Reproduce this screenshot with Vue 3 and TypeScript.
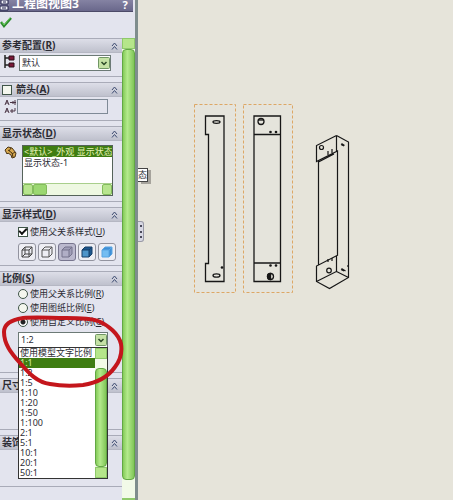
<script setup lang="ts">
import { ref } from 'vue'

const config = ref('默认')
const arrowOn = ref(false)
const arrowLabel = ref('')
const useParentStyle = ref(true)
const scaleMode = ref('custom')
const scale = ref('1:2')
const highlighted = ref('1:1')
const activeStyle = ref('hlr')

const states = ['<默认>_外观 显示状态', '显示状态-1']
const scaleModes = [
  { id: 'parent', label: '使用父关系比例', key: 'R' },
  { id: 'sheet', label: '使用图纸比例', key: 'E' },
  { id: 'custom', label: '使用自定义比例', key: 'C' },
]
const scales = ['使用模型文字比例', '1:1', '1:2', '1:5', '1:10', '1:20', '1:50', '1:100', '2:1', '5:1', '10:1', '20:1', '50:1']
const styles = [
  { id: 'wire', name: '线架图', front: 'none', side: 'none', ink: '#444', hidden: true },
  { id: 'hlv', name: '隐藏线可见', front: 'none', side: 'none', ink: '#555', hidden: false },
  { id: 'hlr', name: '消除隐藏线', front: '#b0aec6', side: '#a19fb8', ink: '#74728c', hidden: false },
  { id: 'edges', name: '带边线上色', front: '#4d94c9', side: '#1d568c', ink: '#173f68', hidden: false },
  { id: 'shaded', name: '上色', front: '#74bdf2', side: '#3f8fd6', ink: '#5aa5e2', hidden: false },
]
</script>

<template>
  <main class="app">
    <aside class="panel">
      <header class="title">
        <svg class="title-icon" viewBox="0 0 12 12"><path d="M1 0h7v4H1zM0 6h8v4H0z" fill="#f3f3fa" stroke="#23234a" /><path d="M2 8h4M3 2h3" stroke="#23234a" /></svg>
        <h1>工程图视图3</h1>
        <button class="help" aria-label="帮助">?</button>
      </header>
      <div class="confirm">
        <button aria-label="确定">
          <svg viewBox="0 0 13 12"><path d="M1 6l3 4 7-8" fill="none" stroke="#2b8a2b" stroke-width="2.500" /><path d="M2 6l2 3 6-7" fill="none" stroke="#6ccb5c" stroke-width="1" /></svg>
        </button>
      </div>

      <div class="scroller">
        <div class="sections">
          <section>
            <h2><span>参考配置(<u>R</u>)</span><svg class="chev" viewBox="0 0 7 8"><path d="M1 4l2.500-3L6 4M1 7.500l2.500-3L6 7.500" /></svg></h2>
            <div class="body row config">
              <svg class="cfg-icon" viewBox="0 0 12 14"><path d="M1 0v13M1 3h4M1 10h4" stroke="#222" stroke-width="1.500" fill="none" /><path d="M5 1h5v4H5zM5 8h5v4H5z" fill="#7a1838" stroke="#2a1018" /></svg>
              <div class="combo">
                <select v-model="config" aria-label="参考配置"><option>默认</option></select>
                <svg class="drop" viewBox="0 0 12 12"><rect x=".5" y=".5" width="11" height="11" rx="1" /><path d="M3.500 5L6 7.500 8.500 5" /></svg>
              </div>
            </div>
          </section>

          <section>
            <h2>
              <label><input v-model="arrowOn" type="checkbox" /><span>箭头(<u>A</u>)</span></label>
              <svg class="chev" viewBox="0 0 7 8"><path d="M1 4l2.500-3L6 4M1 7.500l2.500-3L6 7.500" /></svg>
            </h2>
            <div class="body row arrow">
              <svg class="arrow-icon" viewBox="0 0 13 15"><path d="M1 6l2-5 2 5M2 4h2M1 14l2-5 2 5M2 12h2M6 3.500h6M9 2v3M11 1v5M6 12h5V9M8 10v4" stroke="#4a3444" fill="none" /></svg>
              <input v-model="arrowLabel" class="text" type="text" aria-label="箭头标号" />
            </div>
          </section>

          <section>
            <h2><span>显示状态(<u>D</u>)</span><svg class="chev" viewBox="0 0 7 8"><path d="M1 4l2.500-3L6 4M1 7.500l2.500-3L6 7.500" /></svg></h2>
            <div class="body row state">
              <svg class="state-icon" viewBox="0 0 14 14"><path d="M1 5l3-3 4 1 4 5-1 4-3 1-1-3-3-2-1 1z" fill="#d7a850" stroke="#4b3515" /><path d="M4 5l4 3 1 4M7 3l-2 3M11 7l-3 2" fill="none" stroke="#4b3515" /></svg>
              <div class="listbox">
                <ul role="listbox" aria-label="显示状态">
                  <li v-for="(s, i) in states" :key="s" role="option" :aria-selected="i === 0" :class="{ on: i === 0 }">{{ s }}</li>
                </ul>
                <div class="hbar"><i class="end"></i><i class="thumb"></i><i class="end right"></i></div>
              </div>
            </div>
          </section>

          <section>
            <h2><span>显示样式(<u>D</u>)</span><svg class="chev" viewBox="0 0 7 8"><path d="M1 4l2.500-3L6 4M1 7.500l2.500-3L6 7.500" /></svg></h2>
            <div class="body display">
              <label><input v-model="useParentStyle" type="checkbox" /><span>使用父关系样式(<u>U</u>)</span></label>
              <div class="cubes">
                <button v-for="s in styles" :key="s.id" :class="{ pressed: s.id === activeStyle }" :aria-label="s.name" @click="activeStyle = s.id">
                  <svg viewBox="0 0 14 14">
                    <path d="M2 5l3-3h7v7l-3 3H2z" :fill="s.side" />
                    <path d="M2 5h7v7H2z" :fill="s.front" />
                    <path d="M2 5l3-3h7v7l-3 3H2zM2 5h7v7M9 5l3-3" fill="none" :stroke="s.ink" />
                    <path v-if="s.hidden" d="M5 2v7h7M5 9l-3 3" fill="none" :stroke="s.ink" />
                  </svg>
                </button>
              </div>
            </div>
          </section>

          <section>
            <h2><span>比例(<u>S</u>)</span><svg class="chev" viewBox="0 0 7 8"><path d="M1 4l2.500-3L6 4M1 7.500l2.500-3L6 7.500" /></svg></h2>
            <div class="body scale">
              <label v-for="m in scaleModes" :key="m.id"><input v-model="scaleMode" type="radio" name="scale" :value="m.id" /><span>{{ m.label }}(<u>{{ m.key }}</u>)</span></label>
              <div class="combo">
                <select v-model="scale" aria-label="比例"><option v-for="s in scales" :key="s">{{ s }}</option></select>
                <svg class="drop" viewBox="0 0 12 12"><rect x=".5" y=".5" width="11" height="11" rx="1" /><path d="M3.500 5L6 7.500 8.500 5" /></svg>
                <div class="menu">
                  <ul role="listbox" aria-label="比例选项">
                    <li v-for="s in scales" :key="s" role="option" :aria-selected="s === highlighted" :class="{ on: s === highlighted }">{{ s }}</li>
                  </ul>
                  <div class="vbar"><i class="cap"></i><i class="gap"></i><i class="thumb"></i><i class="cap"></i></div>
                </div>
              </div>
              <svg class="mark" viewBox="0 0 124 80"><path d="M23 5C10 7 4 12 4 19C4 31 11 40 20 50C28 59 36 69 50 71C61 73 72 73 83 72C96 70 108 64 115 54C121 46 122 37 121 31C119 21 108 12 98 8C90 5 78 5 66 5C50 5 36 4 23 5Z" /></svg>
            </div>
          </section>

          <section>
            <h2><span>尺寸</span><svg class="chev" viewBox="0 0 7 8"><path d="M1 4l2.500-3L6 4M1 7.500l2.500-3L6 7.500" /></svg></h2>
            <div class="body plain"></div>
          </section>
          <section>
            <h2><span>装饰</span><svg class="chev" viewBox="0 0 7 8"><path d="M1 4l2.500-3L6 4M1 7.500l2.500-3L6 7.500" /></svg></h2>
            <div class="body plain"></div>
          </section>
        </div>
        <div class="vbar main"><i class="cap"></i><i class="thumb"></i><i class="gap"></i><i class="foot"></i></div>
      </div>
    </aside>

    <section class="canvas" aria-label="图纸">
      <span class="tip">态</span>
      <span class="grip"><i></i><i></i><i></i></span>
      <svg class="drawing" viewBox="190 98 170 200">
        <g class="frame"><rect x="194.500" y="104.500" width="41" height="188" /><rect x="243.500" y="104.500" width="49" height="188" /></g>
        <g class="ink">
          <path d="M205.500 116H224V281.500H205.500V263.500H208.500V134.500H205.500Z" />
          <ellipse cx="216.500" cy="122" rx="3.500" ry="1.300" /><ellipse cx="216.500" cy="275.500" rx="3.500" ry="1.700" />
          <path d="M254 116h26.500v165.500H254zM254 134.500h26.500M254 263h26.500" />
          <circle cx="261" cy="121.500" r="3" /><path d="M258.500 120h5" />
          <circle cx="270.500" cy="276.500" r="3" />
          <path class="solid" d="M270.500 273.500a3 3 0 0 0 0 6z" />
        </g>
        <g class="dots">
          <circle cx="270.500" cy="132" r="1.300" /><circle cx="276" cy="132" r="1.300" /><circle cx="270.500" cy="265.500" r="1.300" /><circle cx="276" cy="265.500" r="1.300" /><circle cx="222" cy="267.500" r="1.300" />
        </g>
        <g class="ink thin">
          <path d="M336.500 135.500L348.500 142V277.500L329.500 288.500L316.500 281.500V266L338 255M336.500 135.500L316.500 145.500V161.500L337.500 151V255.500M336.500 135.500V152M318.500 160.500V265M336.500 256V271.500L316.500 281.500M336.500 271.500L348.500 277.500M318.500 162L334 154" />
          <circle cx="321.500" cy="147.500" r="2" /><circle cx="329" cy="270.500" r="2.300" />
          <path d="M341.500 143.500l3 2M341 144.500l3 1.500M341.500 268.500l4 2.500M341 269.500l3 1.500M328 151v4M332 149v4M328 259v3M332 258v3M348 265v2" />
        </g>
      </svg>
    </section>
  </main>
</template>

<style>
body { margin: 0; background: #e6e4da; }
</style>

<style scoped>
* { box-sizing: border-box; }
.app { display: flex; min-height: 100vh; font: 9px/14px "Noto Sans", "Noto Sans CJK SC", sans-serif; color: #2c2c34; }
h1, h2, ul { margin: 0; padding: 0; list-style: none; }
button { padding: 0; border: 0; background: none; font: inherit; }
svg { display: block; flex: none; }

.panel { display: flex; flex-direction: column; flex: none; width: 138px; background: #e3e4ee; border-right: 3px solid #7f8d8d; }
.title { display: flex; align-items: center; height: 12px; margin-right: 2px; background: linear-gradient(#8583a3, #69678b); border-bottom: 1px solid #4c4a68; color: #fff; overflow: hidden; }
.title-icon { width: 12px; height: 12px; }
.title h1 { flex: 1; font-size: 12px; line-height: 12px; font-weight: 700; padding-bottom: 4px; white-space: nowrap; }
.help { width: 16px; color: #fff; font-size: 11px; font-weight: 700; line-height: 10px; padding-bottom: 2px; }
.confirm { height: 26px; padding-top: 4px; }
.confirm svg { width: 13px; height: 12px; }

.scroller { display: flex; flex: 1; }
.sections { display: flex; flex-direction: column; gap: 5px; flex: 1; min-width: 0; }
h2 { display: flex; align-items: center; justify-content: space-between; height: 15px; padding: 0 4px 0 2px; font-size: 10px; font-weight: 700; line-height: 13px; border-top: 1px solid #a9abb8; border-bottom: 1px solid #b5b7c3; background: linear-gradient(#dddee8, #bfc1cd); white-space: nowrap; }
h2 label { gap: 4px; }
.chev { width: 7px; height: 8px; fill: none; stroke: #3f4d72; stroke-width: 1; }
.body { border-bottom: 1px solid #a9abb8; height: 24px; }
.row { display: flex; align-items: flex-start; gap: 3px; padding: 2px 11px 0 4px; }
label { display: flex; align-items: center; gap: 2px; white-space: nowrap; }

.combo { position: relative; flex: 1; min-width: 0; height: 16px; }
select { display: block; appearance: none; width: 100%; height: 16px; padding: 0 14px 0 2px; border: 1px solid #6c7a76; border-radius: 0; background: #fff; font: inherit; line-height: 14px; color: inherit; }
.drop { position: absolute; top: 2px; right: 1px; width: 12px; height: 12px; fill: #c5e2a6; stroke: #709665; pointer-events: none; }
.drop path { fill: none; stroke: #2c4a28; stroke-width: 1.5; }
.cfg-icon { width: 12px; height: 14px; }
.arrow { gap: 0; padding-right: 14px; }
.arrow-icon { width: 13px; height: 15px; }
.text { flex: 1; min-width: 0; height: 15px; padding: 0 2px; border: 1px solid #7f8a96; background: #e3e4ee; font: inherit; }

input[type="checkbox"], input[type="radio"] { appearance: none; flex: none; width: 10px; height: 10px; margin: 0; border: 1px solid #3f5548; background: #f4f7ee; }
label { position: relative; }
input[type="checkbox"]:checked { display: grid; place-items: center; background: #fff; }
input[type="checkbox"]:checked::before { content: ""; width: 6px; height: 3px; margin-bottom: 2px; border: solid #111; border-width: 0 0 2px 2px; transform: rotate(-45deg); }
input[type="radio"] { border-radius: 50%; }
input[type="radio"]:checked { background: radial-gradient(circle, #222 0 2px, #fff 3px); }

.state { height: 61px; gap: 4px; padding-top: 4px; padding-right: 9px; }
.state-icon { width: 14px; height: 14px; }
.listbox { flex: 1; min-width: 0; height: 51px; display: flex; flex-direction: column; justify-content: space-between; border: 1px solid #55635a; background: #fff; }
.listbox li { height: 11px; padding-left: 1px; line-height: 11px; white-space: nowrap; overflow: hidden; }
.listbox .on { background: #3f7d12; color: #e5f2b5; }
.hbar { display: flex; height: 12px; background: #eef8e2; border-top: 1px solid #a9cf8c; }
.hbar i { border: 1px solid #83bc5c; border-radius: 2px; background: #b7e48e; }
.hbar .end { width: 10px; }
.hbar .thumb { width: 14px; background: #9bd771; }
.hbar .right { margin-left: auto; }

.display { display: flex; flex-direction: column; gap: 5px; height: 44px; padding: 3px 0 0 18px; }
.display label { height: 13px; }
.cubes { display: flex; gap: 2px; }
.cubes button { display: grid; place-items: center; width: 18px; height: 18px; border: 1px solid #92939f; border-radius: 3px; background: #eeeef4; }
.cubes svg { width: 14px; height: 14px; }
.cubes .pressed { background: #bbb9ce; border-color: #77758e; }

.scale { position: relative; height: 87px; padding: 1px 14px 0 18px; }
.scale label { height: 14px; }
.scale .combo { margin-top: 3px; }
.menu { position: absolute; z-index: 1; top: 15px; left: 0; right: 0; display: flex; border: 1px solid #333; background: #fff; }
.menu ul { flex: 1; min-width: 0; }
.menu li { height: 10px; padding-left: 1px; line-height: 10px; white-space: nowrap; }
.menu .on { background: #3f7d12; color: #d9ecae; }
.mark { position: absolute; z-index: 2; top: 27px; left: 0; width: 124px; height: 80px; fill: none; stroke: #c4161c; stroke-width: 4; pointer-events: none; }

.vbar { display: flex; flex-direction: column; flex: none; width: 12px; background: #f2fae8; }
.vbar .cap { height: 11px; border: 1px solid #8fc96b; background: #b5e68a; }
.vbar .gap { height: 9px; }
.vbar .thumb { flex: 1; border: 1px solid #62a744; border-radius: 4px; background: linear-gradient(90deg, #84cb58, #b4ea8c 40%, #80c657); }
.main { width: 13px; }
.main .gap { height: 18px; }
.main .foot { height: 2px; background: #8fc96b; }
.plain { height: 37px; }

.canvas { position: relative; flex: 1; min-width: 0; background: #e6e4da; }
.tip { position: absolute; top: 168px; left: 0; width: 10px; height: 14px; overflow: hidden; border: 1px solid #444; border-left: 0; background: #fff; box-shadow: 3px 2px #a6a39c; line-height: 12px; }
.grip { position: absolute; top: 221px; left: 0; display: flex; flex-direction: column; justify-content: space-evenly; align-items: center; width: 6px; height: 21px; border: 1px solid #9899a5; border-left: 0; border-radius: 0 3px 3px 0; background: #d8d8e4; }
.grip i { width: 2px; height: 2px; background: #4b4b5b; }
.drawing { width: 170px; height: 200px; margin: 98px 0 0 52px; }
.frame { fill: #e5e4dc; stroke: #dda765; stroke-width: 1; stroke-dasharray: 3 2; }
.ink { fill: none; stroke: #171717; stroke-width: 1.3; }
.thin { stroke-width: 1.2; }
.solid, .dots { fill: #171717; }
</style>
